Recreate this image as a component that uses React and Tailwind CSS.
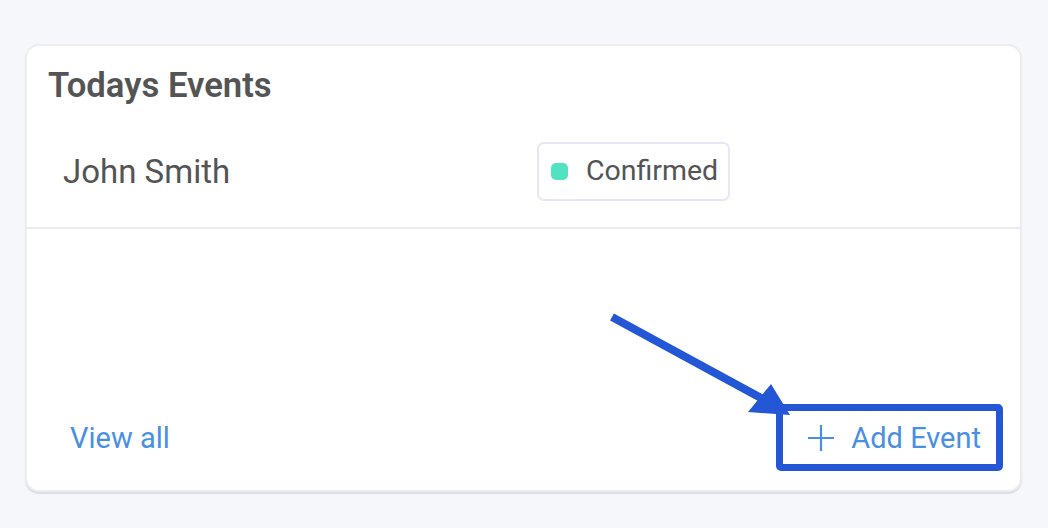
import React from "react";

const Plus = () => (
  <svg width="28" height="28" viewBox="0 0 28 28" fill="none" stroke="currentColor" strokeWidth="2.2">
    <path d="M14 1v26M1 14h26" />
  </svg>
);

// callout drawn over the card (arrow + box around Add Event)
const Callout = () => (
  <svg className="absolute left-0 top-0 pointer-events-none" width="1048" height="528" viewBox="0 0 1048 528">
    <line x1="612" y1="317" x2="772" y2="404" stroke="#2457d6" strokeWidth="8" />
    <polygon points="748,412 790,415 771,384" fill="#2457d6" />
    <rect x="779.5" y="407.5" width="220" height="60" fill="none" stroke="#2457d6" strokeWidth="7" rx="1.5" />
  </svg>
);

export default function App() {
  return (
    <div className="relative w-[1048px] h-[528px] bg-[#f6f7fb] pt-[44px] pl-[25px] font-['Roboto',sans-serif]">
      <div className="w-[997px] h-[448px] bg-white rounded-[14px] border-2 border-[#ececf1] shadow-[0_2px_1px_#dcdde3] flex flex-col">
        <h2 className="pl-[21px] pt-[20px] text-[34.7px] font-semibold text-[#545454] leading-[38px]">Todays Events</h2>

        <div className="flex items-center h-[125px] border-b-2 border-[#e9eaf2] px-[23px] pt-[12px]">
          <div className="w-[475px] pl-[13px] text-[33px] text-[#545454]">John Smith</div>
          <div className="pl-[12px]">
            <span className="inline-flex items-center gap-[18px] h-[59px] pl-[12px] pr-[10px] border-2 border-[#e6e7f3] rounded-[7px] text-[28.5px] text-[#545454]">
              <span className="w-[17px] h-[17px] rounded-[5px] bg-[#4fe3c1]" />
              Confirmed
            </span>
          </div>
        </div>

        <div className="flex-1 flex items-end justify-between pl-[43px] pr-[39px] pb-[34px]">
          <a className="text-[29px] text-[#4a8fe2] leading-[36px]">View all</a>
          <button className="flex items-center gap-[16px] text-[29px] text-[#4a8fe2] leading-[36px]">
            <Plus />
            Add Event
          </button>
        </div>
      </div>
      <Callout />
    </div>
  );
}
